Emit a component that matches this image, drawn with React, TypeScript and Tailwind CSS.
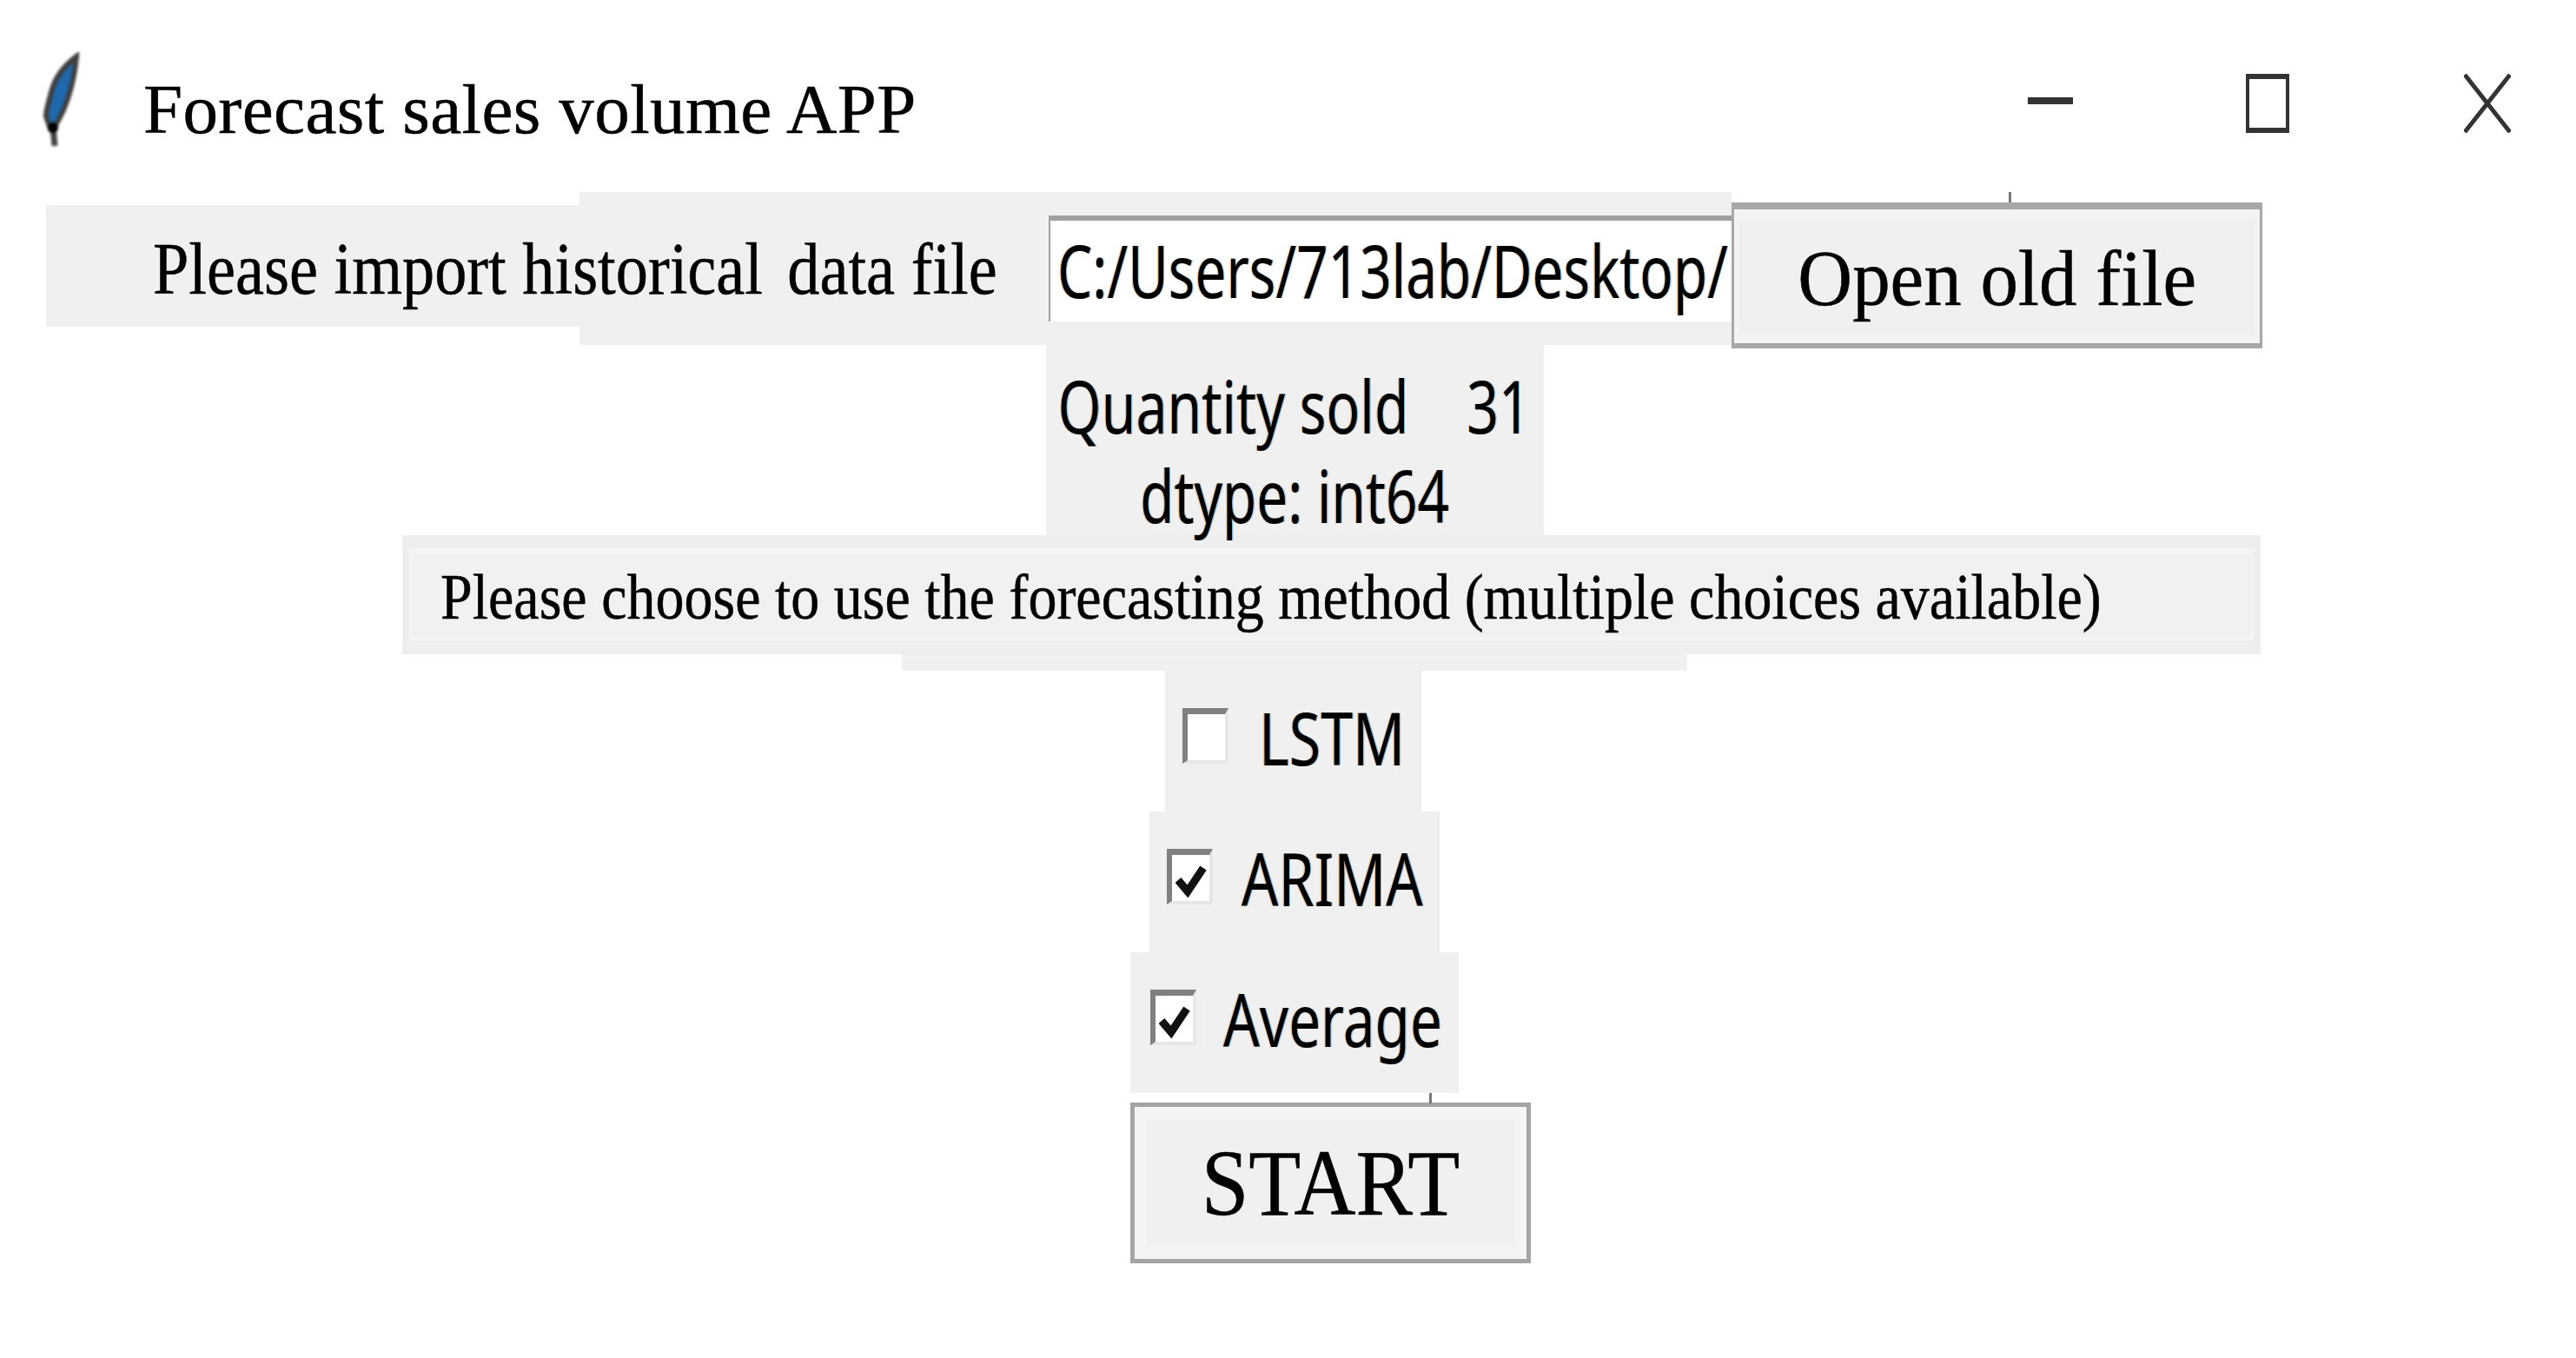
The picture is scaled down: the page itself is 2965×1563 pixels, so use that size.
import React from "react";

const serif = "font-['Liberation_Serif',serif] [-webkit-text-stroke:0.5px_#000]";
const sans = "font-['Noto_Sans',sans-serif] [text-shadow:-1.5px_0_rgba(230,120,0,0.45),1.5px_0_rgba(0,120,220,0.45)]";

function Check({ checked }: { checked: boolean }) {
  return (
    <div className="w-[53px] h-[64px] shrink-0 bg-white border-t-[7px] border-l-[6px] border-r-[4px] border-b-[4px] border-t-[#808080] border-l-[#808080] border-r-[#e6e6e6] border-b-[#e6e6e6] flex items-center justify-center">
      {checked && (
        <svg width="36" height="40" viewBox="0 0 36 40" className="mt-[4px]">
          <path d="M3 20 L14 33 L32 6" fill="none" stroke="#111" strokeWidth="9" />
        </svg>
      )}
    </div>
  );
}

function Option({ label, checked, width, left, textClass }: { label: string; checked: boolean; width: string; left: string; textClass: string }) {
  return (
    <div className={`${width} ${left} h-[162px] bg-[#f0f0f0] flex items-center pb-[12px]`}>
      <Check checked={checked} />
      <span className={textClass}>{label}</span>
    </div>
  );
}

export default function App() {
  return (
    <div className="w-full h-[1563px] overflow-hidden bg-white text-black blur-[0.7px]">
      <div className="h-[221px] flex items-start">
        <svg width="50" height="116" viewBox="0 0 50 116" className="ml-[46px] mt-[60px] shrink-0 blur-[1.5px]">
          <path d="M42 5 C30 14 18 26 13 46 C10 58 7 66 7 74 L12 88 L18 84 C28 68 39 40 42 5 Z" fill="#1e68ad" stroke="#3f3f3f" strokeWidth="6" />
          <path d="M15 86 L17 108" stroke="#444" strokeWidth="7" fill="none" />
          <circle cx="15" cy="87" r="6" fill="#000" />
        </svg>
        <span className={`${serif} text-[81px] leading-none ml-[69px] mt-[86px] whitespace-pre tracking-[0.4px]`}>Forecast sales volume APP</span>
        <div className="ml-auto mr-[75px] mt-[85px] flex items-start">
          <svg width="52" height="68" viewBox="0 0 52 68"><rect x="0" y="27" width="52" height="8" fill="#333" /></svg>
          <svg width="50" height="68" viewBox="0 0 50 68" className="ml-[199px]">
            <rect x="2" y="3" width="46" height="62" fill="none" stroke="#333" strokeWidth="4" />
            <path d="M0 3 H50 M0 65 H50" stroke="#333" strokeWidth="6" />
          </svg>
          <svg width="54" height="68" viewBox="0 0 54 68" className="ml-[201px]"><path d="M1 1 L53 67 M53 1 L1 67" stroke="#333" strokeWidth="5" fill="none" /></svg>
        </div>
      </div>

      <div className="h-[176px] flex items-start pl-[53px]">
        <div className="w-[614px] h-[140px] mt-[15px] bg-[#f0f0f0] flex items-center pl-[123px] pt-[8px]">
          <span className={`${serif} text-[84px] leading-none whitespace-pre inline-block origin-left scale-x-[0.885]`}>Please import historical <span className="ml-[11px]">data file</span></span>
        </div>
        <div className="w-[1326px] h-[176px] bg-[#f0f0f0] pl-[540px] pt-[27px] flex shrink-0">
          <div className="w-[786px] h-[122px] bg-white border-t-[6px] border-l-[2px] border-t-[#a0a0a0] border-l-[#a0a0a0] pl-[8px]">
            <span className={`${sans} text-[84px] leading-[114px] whitespace-pre inline-block origin-left scale-x-[0.76]`}>C:/Users/713lab/Desktop/</span>
          </div>
        </div>
        <div className="relative w-[611px] h-[168px] mt-[12px] shrink-0 bg-[#f0f0f0] border-t-[8px] border-b-[6px] border-x-[3px] border-t-[#a8a8a8] border-b-[#a8a8a8] border-x-[#a8a8a8]">
          <div className="absolute left-[316px] top-[-20px] w-[3px] h-[12px] bg-[#777]"></div>
          <div className="w-full h-full border-y-[10px] border-x-[6px] border-[#f3f3f3] flex items-center justify-center pt-[4px]">
            <span className={`${serif} text-[92px] leading-none whitespace-pre inline-block scale-x-[0.945]`}>Open old file</span>
          </div>
        </div>
      </div>

      <div className="flex flex-col items-center pl-[15px]">
        <div className={`${sans} w-[573px] h-[219px] bg-[#f0f0f0] flex flex-col items-center pt-[18px] text-[84px] leading-[103px]`}>
          <span className="whitespace-pre inline-block scale-x-[0.765]">Quantity sold    31</span>
          <span className="whitespace-pre inline-block scale-x-[0.76]">dtype: int64</span>
        </div>

        <div className="w-[2139px] h-[137px] ml-[84px] bg-[#eeeeee] py-[15px] px-[8px] shrink-0">
          <div className="w-full h-full bg-[#f4f4f4] py-[6px] px-[3px]">
            <div className="w-full h-full bg-[#f1f1f1] flex items-center pl-[33px] pt-[4px]">
              <span className={`${serif} text-[74px] leading-none whitespace-pre inline-block origin-left scale-x-[0.892]`}>Please choose to use the forecasting method (multiple choices available)</span>
            </div>
          </div>
        </div>
        <div className="w-[904px] h-[19px] bg-[#f0f0f0] shrink-0"></div>

        <Option label="LSTM" checked={false} width="w-[295px] mr-[3px]" left="pl-[20px]" textClass={`${sans} text-[84px] leading-none whitespace-pre inline-block origin-left scale-x-[0.79] ml-[35px] pt-[4px]`} />
        <Option label="ARIMA" checked={true} width="w-[334px]" left="pl-[20px]" textClass={`${sans} text-[84px] leading-none whitespace-pre inline-block origin-left scale-x-[0.79] ml-[33px] pt-[4px]`} />
        <Option label="Average" checked={true} width="w-[378px]" left="pl-[23px]" textClass={`${sans} text-[84px] leading-none whitespace-pre inline-block origin-left scale-x-[0.78] ml-[31px] pt-[4px]`} />

        <div className="relative w-[461px] h-[185px] ml-[82px] mt-[11px] bg-[#f0f0f0] border-[5px] border-[#a4a4a4] shrink-0">
          <div className="absolute left-[339px] top-[-16px] w-[3px] h-[12px] bg-[#777]"></div>
          <div className="w-full h-full border-[14px] border-[#f4f4f4] flex items-center justify-center">
            <span className={`${serif} text-[108px] leading-none whitespace-pre inline-block scale-x-[0.91]`}>START</span>
          </div>
        </div>
      </div>
    </div>
  );
}
